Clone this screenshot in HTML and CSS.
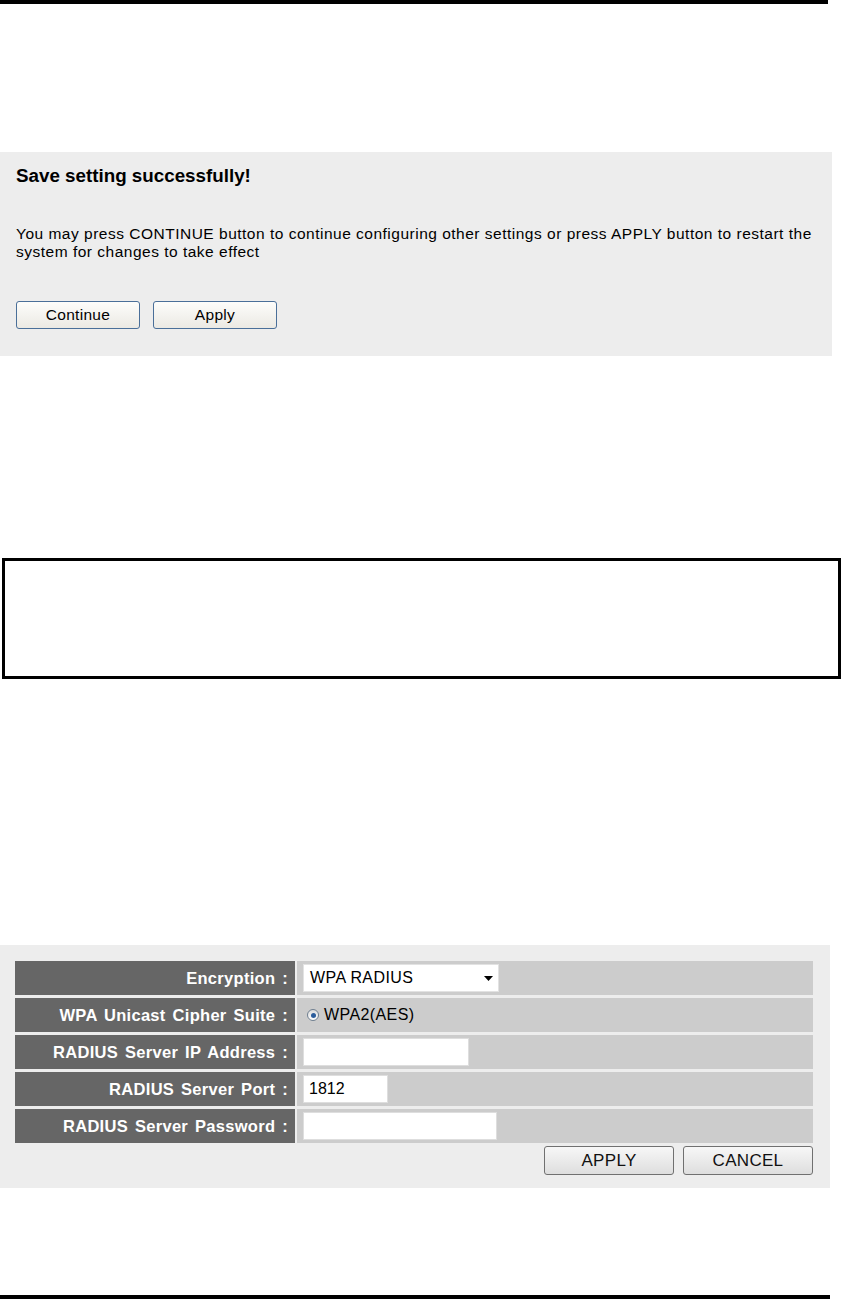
FILE: index.html
```html
<!DOCTYPE html>
<html lang="en">
<head>
    <meta charset="UTF-8">
    <meta name="viewport" content="width=device-width, initial-scale=1.0">
    <title>Wireless Security Settings</title>
    <link rel="stylesheet" href="styles.css">
</head>
<body>
    <div class="rule"></div>

    <div class="notice">
        <h2 class="notice-title">Save setting successfully!</h2>
        <p class="notice-text">You may press CONTINUE button to continue configuring other settings or press APPLY button to restart the system for changes to take effect</p>
        <div class="notice-buttons">
            <button type="button" class="btn-blue">Continue</button>
            <button type="button" class="btn-blue">Apply</button>
        </div>
    </div>

    <div class="note-box"></div>

    <div class="settings">
        <div class="settings-grid">
            <div class="label-cell">Encryption :</div>
            <div class="value-cell">
                <div class="select-box">
                    <span>WPA RADIUS</span>
                    <svg class="select-arrow" width="9" height="5" viewBox="0 0 9 5"><path d="M0 0h9L4.5 5z" fill="#000"/></svg>
                </div>
            </div>

            <div class="label-cell">WPA Unicast Cipher Suite :</div>
            <div class="value-cell">
                <span class="radio"><span class="radio-dot"></span></span>
                <span class="radio-label">WPA2(AES)</span>
            </div>

            <div class="label-cell">RADIUS Server IP Address :</div>
            <div class="value-cell">
                <input type="text" class="field field-ip">
            </div>

            <div class="label-cell">RADIUS Server Port :</div>
            <div class="value-cell">
                <input type="text" class="field field-port" value="1812">
            </div>

            <div class="label-cell">RADIUS Server Password :</div>
            <div class="value-cell">
                <input type="password" class="field field-pass">
            </div>
        </div>
        <div class="settings-buttons">
            <button type="button" class="btn-gray">APPLY</button>
            <button type="button" class="btn-gray">CANCEL</button>
        </div>
    </div>

    <div class="rule rule-bottom"></div>
</body>
</html>
```

FILE: styles.css
```css
html, body {
    margin: 0;
    padding: 0;
}

body {
    width: 841px;
    height: 1300px;
    overflow: hidden;
    font-family: "Liberation Sans", Arial, sans-serif;
    background-color: #fff;
    color: #000;
}

.rule {
    width: 828px;
    height: 4px;
    background-color: #000;
}

.rule-bottom {
    width: 830px;
    margin-top: 107px;
}

/* save notice */
.notice {
    width: 832px;
    box-sizing: border-box;
    margin-top: 148px;
    padding: 13px 16px 27px;
    background-color: #ededed;
}

.notice-title {
    margin: 0;
    font-size: 18.8px;
    line-height: 22px;
    font-weight: bold;
}

.notice-text {
    margin: 38px 0 0;
    font-size: 15.5px;
    line-height: 17.5px;
    letter-spacing: 0.5px;
}

.notice-buttons {
    display: flex;
    gap: 13px;
    margin-top: 41px;
}

.btn-blue {
    width: 124px;
    height: 28px;
    padding: 0;
    font-family: "Liberation Sans", Arial, sans-serif;
    font-size: 15.5px;
    letter-spacing: 0.3px;
    color: #000;
    border: 1px solid #4a6f99;
    border-radius: 3px;
    background: linear-gradient(#fdfdfb, #ebe9e3);
}

/* empty framed box */
.note-box {
    width: 839px;
    height: 121px;
    box-sizing: border-box;
    margin: 202px 0 0 2px;
    border: 3px solid #000;
}

/* radius form */
.settings {
    width: 830px;
    box-sizing: border-box;
    margin-top: 266px;
    padding: 16px 17px 13px 15px;
    background-color: #ededed;
}

.settings-grid {
    display: grid;
    grid-template-columns: 280px 1fr;
    grid-auto-rows: 34px;
    gap: 3px 2px;
    background-color: #ededed;
}

.label-cell {
    display: flex;
    align-items: center;
    justify-content: flex-end;
    padding-right: 7px;
    background-color: #666;
    color: #fff;
    font-size: 16.5px;
    font-weight: bold;
    letter-spacing: 0.3px;
    word-spacing: 2px;
}

.value-cell {
    display: flex;
    align-items: center;
    padding-left: 6px;
    background-color: #ccc;
    font-size: 16px;
    letter-spacing: 0.4px;
}

.select-box {
    display: flex;
    align-items: center;
    justify-content: space-between;
    width: 196px;
    height: 28px;
    box-sizing: border-box;
    padding: 0 5px 0 6px;
    background-color: #fff;
    border: 1px solid #e2e2e2;
}

.select-arrow {
    display: block;
}

.radio {
    display: flex;
    align-items: center;
    justify-content: center;
    width: 12px;
    height: 12px;
    box-sizing: border-box;
    margin-left: 4px;
    border: 1px solid #6f7f90;
    border-radius: 50%;
    background: linear-gradient(#dcdcdc, #fff);
}

.radio-dot {
    width: 5px;
    height: 5px;
    border-radius: 50%;
    background-color: #2c5d9c;
}

.radio-label {
    margin-left: 5px;
}

.field {
    height: 28px;
    box-sizing: border-box;
    padding: 0 5px;
    font-family: "Liberation Sans", Arial, sans-serif;
    font-size: 16px;
    color: #000;
    background-color: #fff;
    border: 1px solid #dedede;
    outline: none;
}

.field-ip {
    width: 166px;
}

.field-port {
    width: 85px;
}

.field-pass {
    width: 194px;
}

.settings-buttons {
    display: flex;
    justify-content: flex-end;
    gap: 9px;
    margin-top: 3px;
}

.btn-gray {
    width: 130px;
    height: 29px;
    padding: 0;
    font-family: "Liberation Sans", Arial, sans-serif;
    font-size: 17px;
    letter-spacing: 0.3px;
    color: #111;
    border: 1px solid #707070;
    border-radius: 3px;
    background: linear-gradient(#f7f7f7, #dedede);
}
```
